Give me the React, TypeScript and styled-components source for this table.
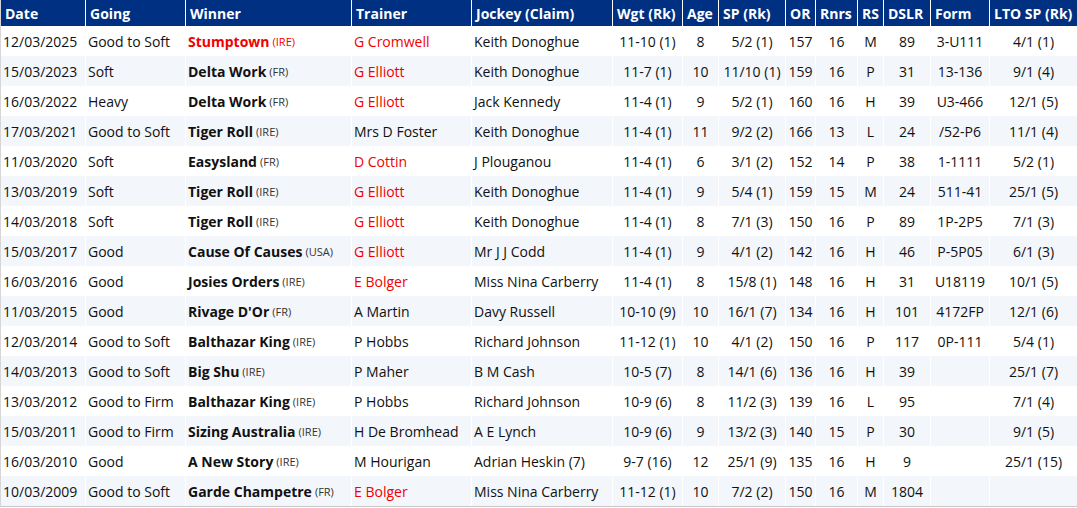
import styled, { createGlobalStyle } from 'styled-components';

const GlobalStyle = createGlobalStyle`
  body {
    margin: 0;
    background: #fff;
    font-family: "Open Sans", "Liberation Sans", sans-serif;
  }
`

const cols = '84px 99px 165px 119px 140px 69px 35px 66px 29px 41px 25px 46px 58px 87px';

const Table = styled.div`
  width: 1077px;
  border-left: 1px solid #d6d6d6;
  border-bottom: 1px solid #c8c8c8;
  box-sizing: border-box;
  font-size: 14px;
  color: #111;
`

const Row = styled.div<{ $alt?: boolean }>`
  display: grid;
  grid-template-columns: ${cols};
  column-gap: 1px;
  background: #fff;
  height: 30px;
  & > div {
    background: ${p => (p.$alt ? '#f3f6fb' : '#fff')};
  }
`

const HeadRow = styled(Row)`
  height: 26px;
  & > div {
    background: #003082;
  }
`

const HeadCell = styled.div`
  display: flex;
  align-items: center;
  padding: 0 4px;
  color: #fff;
  font-weight: bold;
  white-space: nowrap;
  overflow: hidden;
`

const Cell = styled.div<{ $center?: boolean; $red?: boolean }>`
  display: flex;
  align-items: center;
  justify-content: ${p => (p.$center ? 'center' : 'flex-start')};
  padding: 0 2px;
  white-space: nowrap;
  overflow: hidden;
  color: ${p => (p.$red ? '#f20000' : '#111')};
`

const Horse = styled.span<{ $red?: boolean }>`
  font-weight: bold;
  color: ${p => (p.$red ? '#f20000' : '#111')};
`

const Bred = styled.span<{ $red?: boolean }>`
  font-size: 11px;
  margin-left: 3px;
  color: ${p => (p.$red ? '#f20000' : '#333')};
`

type Race = {
  date: string;
  going: string;
  horse: string;
  bred: string;
  trainer: string;
  jockey: string;
  wgt: string;
  age: string;
  sp: string;
  or: string;
  rnrs: string;
  rs: string;
  dslr: string;
  form: string;
  lto: string;
  redHorse?: boolean;
  redTrainer?: boolean;
};

const races: Race[] = [
  { date: '12/03/2025', going: 'Good to Soft', horse: 'Stumptown', bred: 'IRE', trainer: 'G Cromwell', jockey: 'Keith Donoghue', wgt: '11-10 (1)', age: '8', sp: '5/2 (1)', or: '157', rnrs: '16', rs: 'M', dslr: '89', form: '3-U111', lto: '4/1 (1)', redHorse: true, redTrainer: true },
  { date: '15/03/2023', going: 'Soft', horse: 'Delta Work', bred: 'FR', trainer: 'G Elliott', jockey: 'Keith Donoghue', wgt: '11-7 (1)', age: '10', sp: '11/10 (1)', or: '159', rnrs: '16', rs: 'P', dslr: '31', form: '13-136', lto: '9/1 (4)', redTrainer: true },
  { date: '16/03/2022', going: 'Heavy', horse: 'Delta Work', bred: 'FR', trainer: 'G Elliott', jockey: 'Jack Kennedy', wgt: '11-4 (1)', age: '9', sp: '5/2 (1)', or: '160', rnrs: '16', rs: 'H', dslr: '39', form: 'U3-466', lto: '12/1 (5)', redTrainer: true },
  { date: '17/03/2021', going: 'Good to Soft', horse: 'Tiger Roll', bred: 'IRE', trainer: 'Mrs D Foster', jockey: 'Keith Donoghue', wgt: '11-4 (1)', age: '11', sp: '9/2 (2)', or: '166', rnrs: '13', rs: 'L', dslr: '24', form: '/52-P6', lto: '11/1 (4)' },
  { date: '11/03/2020', going: 'Soft', horse: 'Easysland', bred: 'FR', trainer: 'D Cottin', jockey: 'J Plouganou', wgt: '11-4 (1)', age: '6', sp: '3/1 (2)', or: '152', rnrs: '14', rs: 'P', dslr: '38', form: '1-1111', lto: '5/2 (1)', redTrainer: true },
  { date: '13/03/2019', going: 'Soft', horse: 'Tiger Roll', bred: 'IRE', trainer: 'G Elliott', jockey: 'Keith Donoghue', wgt: '11-4 (1)', age: '9', sp: '5/4 (1)', or: '159', rnrs: '15', rs: 'M', dslr: '24', form: '511-41', lto: '25/1 (5)', redTrainer: true },
  { date: '14/03/2018', going: 'Soft', horse: 'Tiger Roll', bred: 'IRE', trainer: 'G Elliott', jockey: 'Keith Donoghue', wgt: '11-4 (1)', age: '8', sp: '7/1 (3)', or: '150', rnrs: '16', rs: 'P', dslr: '89', form: '1P-2P5', lto: '7/1 (3)', redTrainer: true },
  { date: '15/03/2017', going: 'Good', horse: 'Cause Of Causes', bred: 'USA', trainer: 'G Elliott', jockey: 'Mr J J Codd', wgt: '11-4 (1)', age: '9', sp: '4/1 (2)', or: '142', rnrs: '16', rs: 'H', dslr: '46', form: 'P-5P05', lto: '6/1 (3)', redTrainer: true },
  { date: '16/03/2016', going: 'Good', horse: 'Josies Orders', bred: 'IRE', trainer: 'E Bolger', jockey: 'Miss Nina Carberry', wgt: '11-4 (1)', age: '8', sp: '15/8 (1)', or: '148', rnrs: '16', rs: 'H', dslr: '31', form: 'U18119', lto: '10/1 (5)', redTrainer: true },
  { date: '11/03/2015', going: 'Good', horse: "Rivage D'Or", bred: 'FR', trainer: 'A Martin', jockey: 'Davy Russell', wgt: '10-10 (9)', age: '10', sp: '16/1 (7)', or: '134', rnrs: '16', rs: 'H', dslr: '101', form: '4172FP', lto: '12/1 (6)' },
  { date: '12/03/2014', going: 'Good to Soft', horse: 'Balthazar King', bred: 'IRE', trainer: 'P Hobbs', jockey: 'Richard Johnson', wgt: '11-12 (1)', age: '10', sp: '4/1 (2)', or: '150', rnrs: '16', rs: 'P', dslr: '117', form: '0P-111', lto: '5/4 (1)' },
  { date: '14/03/2013', going: 'Good to Soft', horse: 'Big Shu', bred: 'IRE', trainer: 'P Maher', jockey: 'B M Cash', wgt: '10-5 (7)', age: '8', sp: '14/1 (6)', or: '136', rnrs: '16', rs: 'H', dslr: '39', form: '', lto: '25/1 (7)' },
  { date: '13/03/2012', going: 'Good to Firm', horse: 'Balthazar King', bred: 'IRE', trainer: 'P Hobbs', jockey: 'Richard Johnson', wgt: '10-9 (6)', age: '8', sp: '11/2 (3)', or: '139', rnrs: '16', rs: 'L', dslr: '95', form: '', lto: '7/1 (4)' },
  { date: '15/03/2011', going: 'Good to Firm', horse: 'Sizing Australia', bred: 'IRE', trainer: 'H De Bromhead', jockey: 'A E Lynch', wgt: '10-9 (6)', age: '9', sp: '13/2 (3)', or: '140', rnrs: '15', rs: 'P', dslr: '30', form: '', lto: '9/1 (5)' },
  { date: '16/03/2010', going: 'Good', horse: 'A New Story', bred: 'IRE', trainer: 'M Hourigan', jockey: 'Adrian Heskin (7)', wgt: '9-7 (16)', age: '12', sp: '25/1 (9)', or: '135', rnrs: '16', rs: 'H', dslr: '9', form: '', lto: '25/1 (15)' },
  { date: '10/03/2009', going: 'Good to Soft', horse: 'Garde Champetre', bred: 'FR', trainer: 'E Bolger', jockey: 'Miss Nina Carberry', wgt: '11-12 (1)', age: '10', sp: '7/2 (2)', or: '150', rnrs: '16', rs: 'M', dslr: '1804', form: '', lto: '', redTrainer: true },
];

const headers = ['Date', 'Going', 'Winner', 'Trainer', 'Jockey (Claim)', 'Wgt (Rk)', 'Age', 'SP (Rk)', 'OR', 'Rnrs', 'RS', 'DSLR', 'Form', 'LTO SP (Rk)'];

export default function App() {
  return (
    <>
      <GlobalStyle />
      <Table>
        <HeadRow>
          {headers.map(h => (
            <HeadCell key={h}>{h}</HeadCell>
          ))}
        </HeadRow>
        {races.map((r, i) => (
          <Row key={r.date} $alt={i % 2 === 1}>
            <Cell>{r.date}</Cell>
            <Cell>{r.going}</Cell>
            <Cell>
              <Horse $red={r.redHorse}>{r.horse}</Horse>
              <Bred $red={r.redHorse}>({r.bred})</Bred>
            </Cell>
            <Cell $red={r.redTrainer}>{r.trainer}</Cell>
            <Cell>{r.jockey}</Cell>
            <Cell $center>{r.wgt}</Cell>
            <Cell $center>{r.age}</Cell>
            <Cell $center>{r.sp}</Cell>
            <Cell $center>{r.or}</Cell>
            <Cell $center>{r.rnrs}</Cell>
            <Cell $center>{r.rs}</Cell>
            <Cell $center>{r.dslr}</Cell>
            <Cell $center>{r.form}</Cell>
            <Cell $center>{r.lto}</Cell>
          </Row>
        ))}
      </Table>
    </>
  );
}
